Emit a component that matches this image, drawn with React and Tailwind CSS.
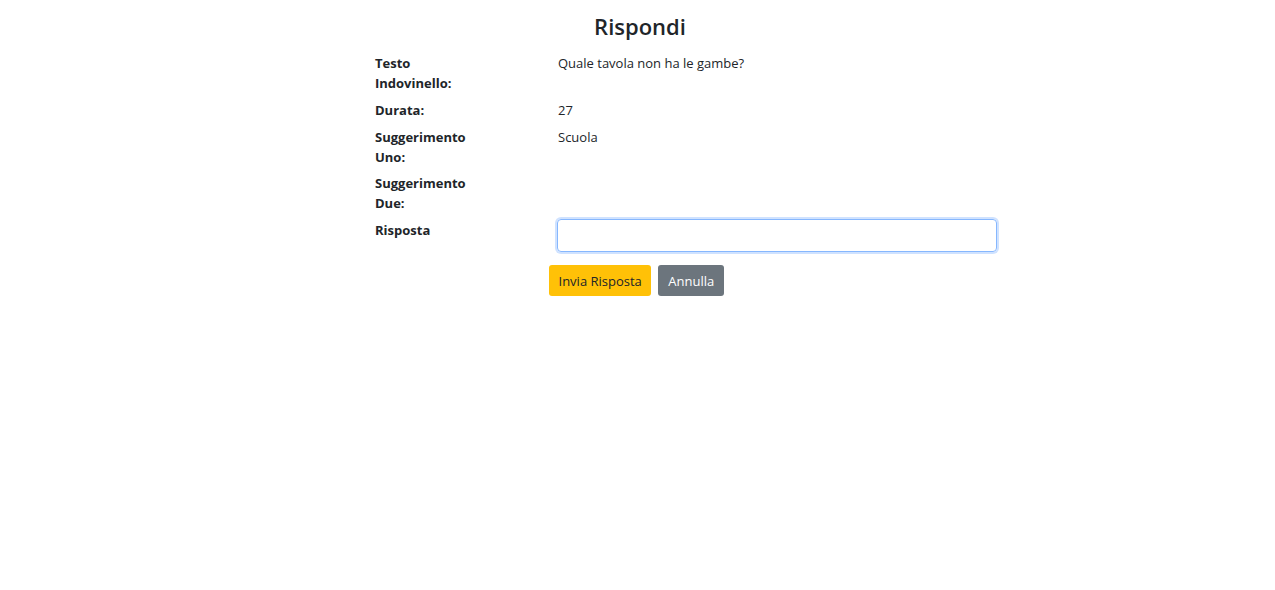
import React from "react";

const rows = [
  { label: ["Testo", "Indovinello:"], value: "Quale tavola non ha le gambe?", gap: "mb-[7px]" },
  { label: ["Durata:"], value: "27", gap: "mb-[7px]" },
  { label: ["Suggerimento", "Uno:"], value: "Scuola", gap: "mb-[6px]" },
  { label: ["Suggerimento", "Due:"], value: "", gap: "mb-[6px]" },
];

export default function App() {
  return (
    <div className="min-h-screen bg-white text-[#212529] font-['Open_Sans',sans-serif]">
      <h1 className="text-center text-[22px] font-semibold leading-[28px] pt-[12px] pl-[5px]">
        Rispondi
      </h1>

      <div className="ml-[363px] w-[640px] mt-[13px] text-[13px] leading-[20px]">
        {rows.map((r, i) => (
          <div key={i} className={"flex " + r.gap}>
            <div className="w-[183px] pl-[12px] font-bold">
              {r.label.map((l, j) => (
                <div key={j}>{l}</div>
              ))}
            </div>
            <div className="pl-[12px]">{r.value}</div>
          </div>
        ))}

        <div className="flex">
          <div className="w-[183px] pl-[12px] font-bold pt-[1px]">Risposta</div>
          <div className="pl-[11px]">
            <input
              type="text"
              className="w-[440px] h-[33px] rounded-[4px] border border-[#86b7fe] shadow-[0_0_0_2px_rgba(13,110,253,0.2)] outline-none px-3"
            />
          </div>
        </div>

        <div className="flex gap-[7px] mt-[13px] ml-[186px]">
          <button className="h-[31px] px-[9.5px] rounded-[3px] bg-[#ffc107] text-[#212529] text-[13px]">
            Invia Risposta
          </button>
          <button className="h-[31px] px-[10px] rounded-[3px] bg-[#6c757d] text-white text-[13px]">
            Annulla
          </button>
        </div>
      </div>
    </div>
  );
}
